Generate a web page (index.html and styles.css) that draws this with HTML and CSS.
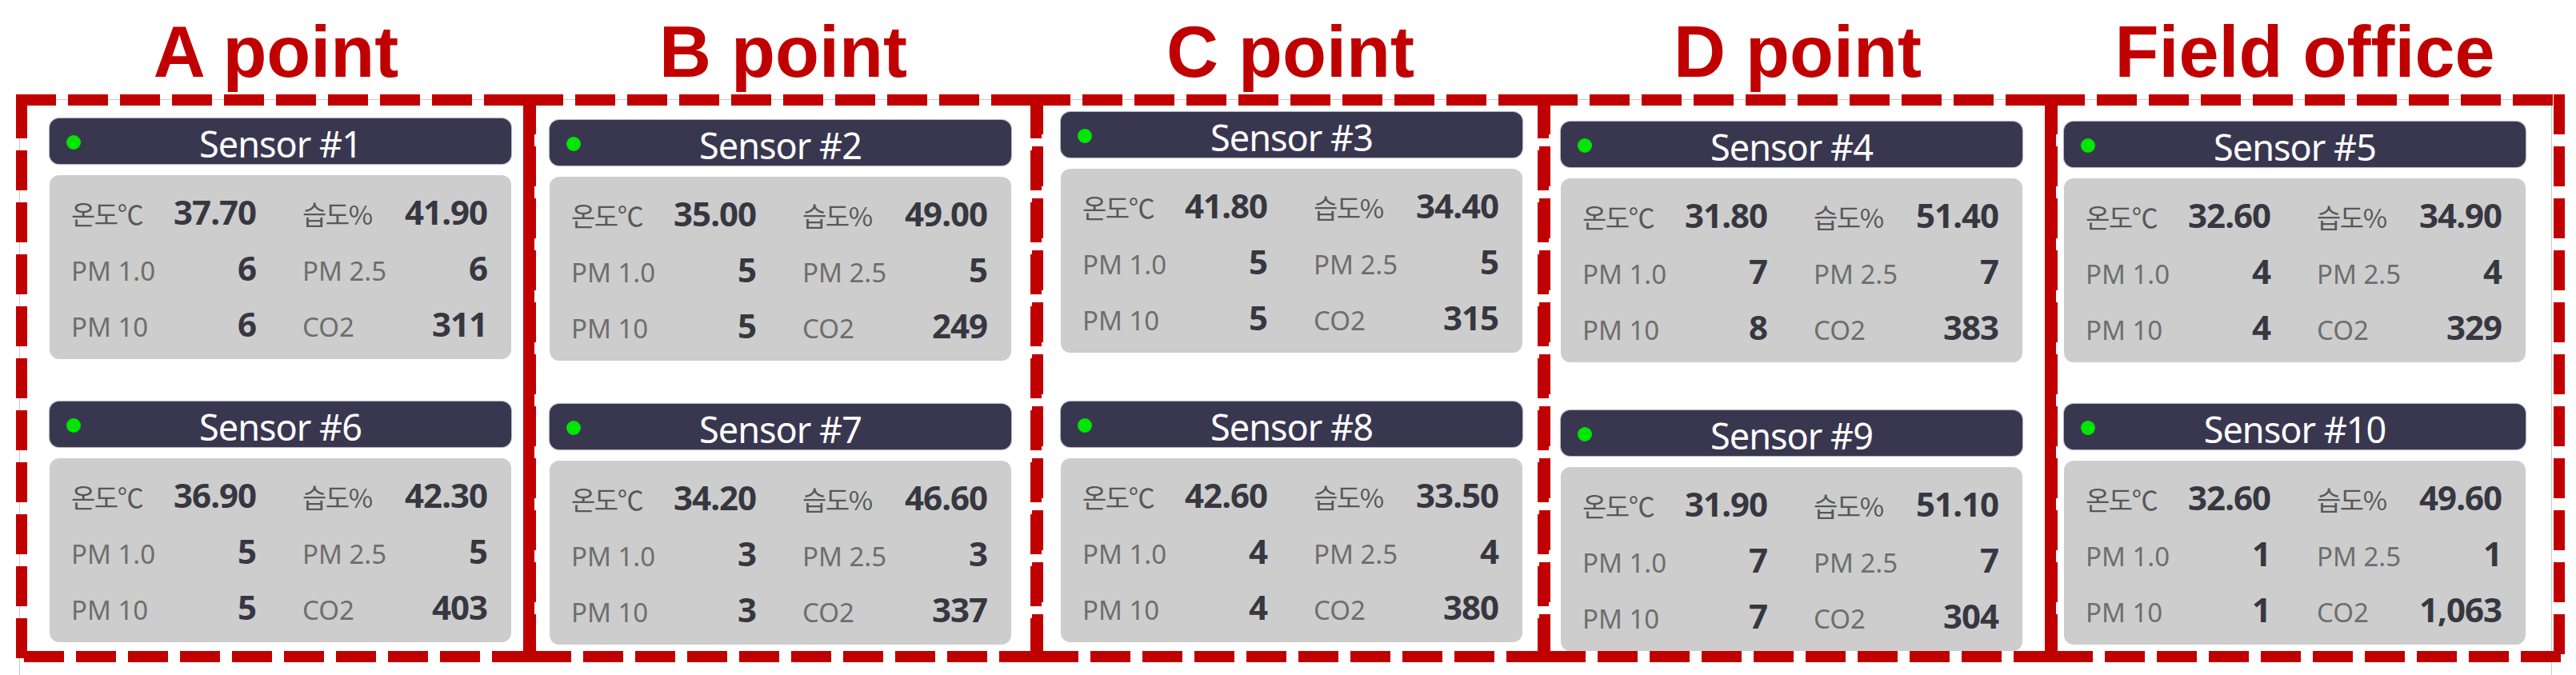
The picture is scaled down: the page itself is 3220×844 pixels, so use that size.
FILE: index.html
```html
<!DOCTYPE html>
<html lang="ko">
<head>
<meta charset="utf-8">
<title>Sensor sites</title>
<link rel="stylesheet" href="styles.css">
</head>
<body>
<main class="board">
  <div class="backline"></div>

  <section class="site site-a">
    <h2 class="site-title">A point</h2>
    <div class="site-box">
      <svg class="dash-frame" aria-hidden="true"><rect class="dash-rect" x="0" y="0" width="100%" height="100%"/></svg>
      <article class="sensor">
        <header class="sensor-head"><span class="dot"></span><span class="sensor-name">Sensor #1</span></header>
        <div class="sensor-body">
          <div class="metric"><span class="label label-ko">온도℃</span><span class="value">37.70</span></div>
          <div class="metric"><span class="label label-ko">습도%</span><span class="value">41.90</span></div>
          <div class="metric"><span class="label">PM 1.0</span><span class="value">6</span></div>
          <div class="metric"><span class="label">PM 2.5</span><span class="value">6</span></div>
          <div class="metric"><span class="label">PM 10</span><span class="value">6</span></div>
          <div class="metric"><span class="label">CO2</span><span class="value">311</span></div>
        </div>
      </article>
      <article class="sensor sensor-second">
        <header class="sensor-head"><span class="dot"></span><span class="sensor-name">Sensor #6</span></header>
        <div class="sensor-body">
          <div class="metric"><span class="label label-ko">온도℃</span><span class="value">36.90</span></div>
          <div class="metric"><span class="label label-ko">습도%</span><span class="value">42.30</span></div>
          <div class="metric"><span class="label">PM 1.0</span><span class="value">5</span></div>
          <div class="metric"><span class="label">PM 2.5</span><span class="value">5</span></div>
          <div class="metric"><span class="label">PM 10</span><span class="value">5</span></div>
          <div class="metric"><span class="label">CO2</span><span class="value">403</span></div>
        </div>
      </article>
    </div>
  </section>

  <section class="site site-b">
    <h2 class="site-title">B point</h2>
    <div class="site-box solid-left">
      <svg class="dash-frame" aria-hidden="true"><rect class="dash-rect" x="0" y="0" width="100%" height="100%"/></svg>
      <article class="sensor">
        <header class="sensor-head"><span class="dot"></span><span class="sensor-name">Sensor #2</span></header>
        <div class="sensor-body">
          <div class="metric"><span class="label label-ko">온도℃</span><span class="value">35.00</span></div>
          <div class="metric"><span class="label label-ko">습도%</span><span class="value">49.00</span></div>
          <div class="metric"><span class="label">PM 1.0</span><span class="value">5</span></div>
          <div class="metric"><span class="label">PM 2.5</span><span class="value">5</span></div>
          <div class="metric"><span class="label">PM 10</span><span class="value">5</span></div>
          <div class="metric"><span class="label">CO2</span><span class="value">249</span></div>
        </div>
      </article>
      <article class="sensor sensor-second">
        <header class="sensor-head"><span class="dot"></span><span class="sensor-name">Sensor #7</span></header>
        <div class="sensor-body">
          <div class="metric"><span class="label label-ko">온도℃</span><span class="value">34.20</span></div>
          <div class="metric"><span class="label label-ko">습도%</span><span class="value">46.60</span></div>
          <div class="metric"><span class="label">PM 1.0</span><span class="value">3</span></div>
          <div class="metric"><span class="label">PM 2.5</span><span class="value">3</span></div>
          <div class="metric"><span class="label">PM 10</span><span class="value">3</span></div>
          <div class="metric"><span class="label">CO2</span><span class="value">337</span></div>
        </div>
      </article>
    </div>
  </section>

  <section class="site site-c">
    <h2 class="site-title">C point</h2>
    <div class="site-box">
      <svg class="dash-frame" aria-hidden="true"><rect class="dash-rect" x="0" y="0" width="100%" height="100%"/></svg>
      <article class="sensor">
        <header class="sensor-head"><span class="dot"></span><span class="sensor-name">Sensor #3</span></header>
        <div class="sensor-body">
          <div class="metric"><span class="label label-ko">온도℃</span><span class="value">41.80</span></div>
          <div class="metric"><span class="label label-ko">습도%</span><span class="value">34.40</span></div>
          <div class="metric"><span class="label">PM 1.0</span><span class="value">5</span></div>
          <div class="metric"><span class="label">PM 2.5</span><span class="value">5</span></div>
          <div class="metric"><span class="label">PM 10</span><span class="value">5</span></div>
          <div class="metric"><span class="label">CO2</span><span class="value">315</span></div>
        </div>
      </article>
      <article class="sensor sensor-second">
        <header class="sensor-head"><span class="dot"></span><span class="sensor-name">Sensor #8</span></header>
        <div class="sensor-body">
          <div class="metric"><span class="label label-ko">온도℃</span><span class="value">42.60</span></div>
          <div class="metric"><span class="label label-ko">습도%</span><span class="value">33.50</span></div>
          <div class="metric"><span class="label">PM 1.0</span><span class="value">4</span></div>
          <div class="metric"><span class="label">PM 2.5</span><span class="value">4</span></div>
          <div class="metric"><span class="label">PM 10</span><span class="value">4</span></div>
          <div class="metric"><span class="label">CO2</span><span class="value">380</span></div>
        </div>
      </article>
    </div>
  </section>

  <section class="site site-d">
    <h2 class="site-title">D point</h2>
    <div class="site-box">
      <svg class="dash-frame" aria-hidden="true"><rect class="dash-rect" x="0" y="0" width="100%" height="100%"/></svg>
      <article class="sensor">
        <header class="sensor-head"><span class="dot"></span><span class="sensor-name">Sensor #4</span></header>
        <div class="sensor-body">
          <div class="metric"><span class="label label-ko">온도℃</span><span class="value">31.80</span></div>
          <div class="metric"><span class="label label-ko">습도%</span><span class="value">51.40</span></div>
          <div class="metric"><span class="label">PM 1.0</span><span class="value">7</span></div>
          <div class="metric"><span class="label">PM 2.5</span><span class="value">7</span></div>
          <div class="metric"><span class="label">PM 10</span><span class="value">8</span></div>
          <div class="metric"><span class="label">CO2</span><span class="value">383</span></div>
        </div>
      </article>
      <article class="sensor sensor-second">
        <header class="sensor-head"><span class="dot"></span><span class="sensor-name">Sensor #9</span></header>
        <div class="sensor-body">
          <div class="metric"><span class="label label-ko">온도℃</span><span class="value">31.90</span></div>
          <div class="metric"><span class="label label-ko">습도%</span><span class="value">51.10</span></div>
          <div class="metric"><span class="label">PM 1.0</span><span class="value">7</span></div>
          <div class="metric"><span class="label">PM 2.5</span><span class="value">7</span></div>
          <div class="metric"><span class="label">PM 10</span><span class="value">7</span></div>
          <div class="metric"><span class="label">CO2</span><span class="value">304</span></div>
        </div>
      </article>
    </div>
  </section>

  <section class="site site-e">
    <h2 class="site-title">Field office</h2>
    <div class="site-box solid-left">
      <svg class="dash-frame" aria-hidden="true"><rect class="dash-rect" x="0" y="0" width="100%" height="100%"/></svg>
      <article class="sensor">
        <header class="sensor-head"><span class="dot"></span><span class="sensor-name">Sensor #5</span></header>
        <div class="sensor-body">
          <div class="metric"><span class="label label-ko">온도℃</span><span class="value">32.60</span></div>
          <div class="metric"><span class="label label-ko">습도%</span><span class="value">34.90</span></div>
          <div class="metric"><span class="label">PM 1.0</span><span class="value">4</span></div>
          <div class="metric"><span class="label">PM 2.5</span><span class="value">4</span></div>
          <div class="metric"><span class="label">PM 10</span><span class="value">4</span></div>
          <div class="metric"><span class="label">CO2</span><span class="value">329</span></div>
        </div>
      </article>
      <article class="sensor sensor-second">
        <header class="sensor-head"><span class="dot"></span><span class="sensor-name">Sensor #10</span></header>
        <div class="sensor-body">
          <div class="metric"><span class="label label-ko">온도℃</span><span class="value">32.60</span></div>
          <div class="metric"><span class="label label-ko">습도%</span><span class="value">49.60</span></div>
          <div class="metric"><span class="label">PM 1.0</span><span class="value">1</span></div>
          <div class="metric"><span class="label">PM 2.5</span><span class="value">1</span></div>
          <div class="metric"><span class="label">PM 10</span><span class="value">1</span></div>
          <div class="metric"><span class="label">CO2</span><span class="value">1,063</span></div>
        </div>
      </article>
    </div>
  </section>
</main>
</body>
</html>
```

FILE: styles.css
```css
* { box-sizing: border-box; }

html, body {
  margin: 0;
  padding: 0;
  background: #ffffff;
}

body {
  width: 3220px;
  height: 844px;
  overflow: hidden;
  font-family: "Noto Sans", "Noto Sans CJK KR", sans-serif;
}

.board {
  position: relative;
  display: flex;
  align-items: flex-start;
  padding: 15px 0 0 20px;
  height: 844px;
}

/* faint frame of the original screenshots, lying under the dashed boxes */
.backline {
  position: absolute;
  left: 24px;
  top: 124px;
  width: 3166px;
  height: 740px;
  border: 1px solid #c9c9c9;
  border-bottom: none;
}

.site {
  position: relative;
  width: 650px;
  flex: 0 0 650px;
  display: flex;
  flex-direction: column;
}

.site + .site { margin-left: -16px; }

.site-title {
  margin: 0 0 3px;
  height: 100px;
  line-height: 100px;
  font-family: "Liberation Sans", Arial, sans-serif;
  font-weight: 700;
  font-size: 90px;
  color: #c00000;
  text-align: center;
  white-space: nowrap;
}

.site-box {
  position: relative;
  height: 710px;
  padding-top: var(--top);
  padding-left: var(--left);
}

.site-a { --top: 30px; --left: 42px; --gap: 53px; }
.site-b { --top: 32px; --left: 33px; --gap: 54px; }
.site-c { --top: 22px; --left: 38px; --gap: 61px; }
.site-d { --top: 34px; --left: 29px; --gap: 60px; }
.site-e { --top: 34px; --left: 24px; --gap: 52px; }

.dash-frame {
  position: absolute;
  left: 0;
  top: 0;
  width: 100%;
  height: 100%;
  overflow: hidden;
  z-index: 2;
  pointer-events: none;
}

.dash-rect {
  fill: none;
  stroke: #c00000;
  stroke-width: 28;
  stroke-dasharray: 50 15;
}

.solid-left::after {
  content: "";
  position: absolute;
  left: 0;
  top: 8px;
  bottom: 0;
  width: 14px;
  background: #c00000;
  z-index: 3;
}

.sensor {
  width: 577px;
}

.sensor-second { margin-top: var(--gap); }

.sensor-head {
  height: 57px;
  border-radius: 12px;
  background: #393750;
  box-shadow: 0 0 1px 1px rgba(40, 38, 60, 0.35);
  display: grid;
  grid-template-columns: 18px 1fr 18px;
  align-items: center;
  padding: 0 21px;
}

.dot {
  width: 18px;
  height: 18px;
  border-radius: 50%;
  background: #00e600;
}

.sensor-name {
  text-align: center;
  color: #ffffff;
  font-size: 45px;
  line-height: 57px;
  padding-top: 3px;
  letter-spacing: -1px;
}

.sensor-body {
  margin-top: 14px;
  height: 230px;
  border-radius: 12px;
  background: #cdcdcd;
  padding: 10px 30px 10px 27px;
  display: grid;
  grid-template-columns: 1fr 1fr;
  grid-template-rows: 70px 70px 70px;
  column-gap: 58px;
  align-items: center;
}

.metric {
  display: flex;
  justify-content: space-between;
  align-items: baseline;
}

.label {
  font-size: 33px;
  color: #6e6e6e;
}

.label-ko {
  font-family: "Noto Sans CJK KR", "Noto Sans", sans-serif;
  font-size: 33px;
  color: #585858;
  letter-spacing: -1.5px;
}

.value {
  font-size: 42px;
  font-weight: 700;
  color: #373741;
  letter-spacing: -1px;
}
```
